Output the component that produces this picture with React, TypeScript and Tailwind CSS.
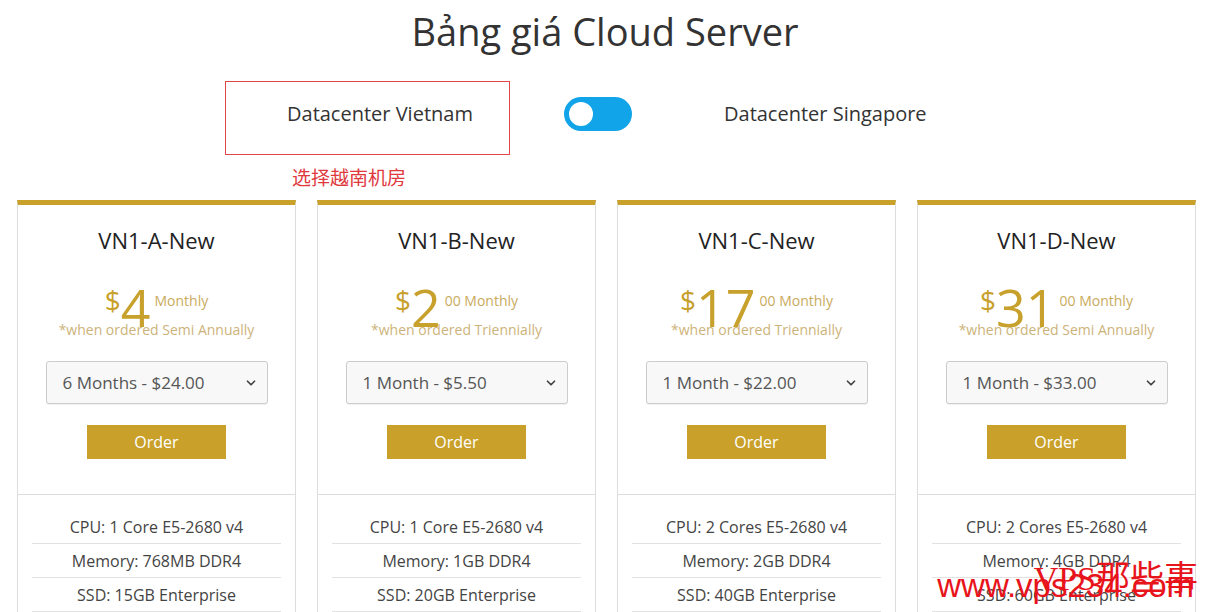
import { ChevronDown } from 'lucide-react';

interface Plan {
    name: string;
    whole: string;
    cents: string | null;
    note: string;
    option: string;
    cpu: string;
    memory: string;
    ssd: string;
}

const plans: Plan[] = [
    {
        name: 'VN1-A-New',
        whole: '4',
        cents: null,
        note: '*when ordered Semi Annually',
        option: '6 Months - $24.00',
        cpu: 'CPU: 1 Core E5-2680 v4',
        memory: 'Memory: 768MB DDR4',
        ssd: 'SSD: 15GB Enterprise',
    },
    {
        name: 'VN1-B-New',
        whole: '2',
        cents: '00',
        note: '*when ordered Triennially',
        option: '1 Month - $5.50',
        cpu: 'CPU: 1 Core E5-2680 v4',
        memory: 'Memory: 1GB DDR4',
        ssd: 'SSD: 20GB Enterprise',
    },
    {
        name: 'VN1-C-New',
        whole: '17',
        cents: '00',
        note: '*when ordered Triennially',
        option: '1 Month - $22.00',
        cpu: 'CPU: 2 Cores E5-2680 v4',
        memory: 'Memory: 2GB DDR4',
        ssd: 'SSD: 40GB Enterprise',
    },
    {
        name: 'VN1-D-New',
        whole: '31',
        cents: '00',
        note: '*when ordered Semi Annually',
        option: '1 Month - $33.00',
        cpu: 'CPU: 2 Cores E5-2680 v4',
        memory: 'Memory: 4GB DDR4',
        ssd: 'SSD: 60GB Enterprise',
    },
];

function PlanCard({ plan }: { plan: Plan }) {
    return (
        <div className="border border-[#dddddd] border-t-[5px] border-t-[#c9a02a] bg-white">
            <div className="flex flex-col items-center border-b border-[#dddddd] pt-[21px] pb-[35px]">
                <h3 className="text-[22px] leading-[28px] text-[#222]">{plan.name}</h3>

                <div className="mt-[27px] flex h-[39px] items-start justify-center text-[#c8a02c]">
                    <span className="mt-[5px] text-[28px] leading-none">$</span>
                    <span className="text-[52px] leading-none">{plan.whole}</span>
                    <span className="mt-[13px] ml-[4px] text-[14px] leading-none text-[#c9ab5c]">
                        {plan.cents ? `${plan.cents} Monthly` : 'Monthly'}
                    </span>
                </div>
                <p className="text-[14px] leading-[20px] text-[#cdb37a]">{plan.note}</p>

                <div className="mt-[21px] flex h-[43px] w-[222px] items-center justify-between rounded-[3px] border border-[#cccccc] bg-[#f8f8f8] pr-[9px] pl-[16px] text-[17px] text-[#555] shadow-[0_1px_1px_rgba(0,0,0,0.06)]">
                    <span>{plan.option}</span>
                    <ChevronDown className="h-[14px] w-[14px] text-[#444]" strokeWidth={3} />
                </div>

                <button className="mt-[21px] h-[34px] w-[139px] bg-[#c9a02a] text-[16px] text-white">Order</button>
            </div>

            <ul className="px-[14px] pt-[16px] text-center text-[16px] text-[#444]">
                <li className="h-[33px] border-b border-[#e2e2e2] leading-[33px]">{plan.cpu}</li>
                <li className="h-[34px] border-b border-[#e2e2e2] leading-[34px]">{plan.memory}</li>
                <li className="h-[34px] border-b border-[#e2e2e2] leading-[34px]">{plan.ssd}</li>
            </ul>
        </div>
    );
}

export default function App() {
    return (
        <div
            className="relative h-[612px] w-[1210px] overflow-hidden bg-white"
            style={{ fontFamily: '"Open Sans", "Noto Sans CJK SC", sans-serif' }}
        >
            <h1 className="pt-[8px] text-center text-[38px] leading-[46px] text-[#333]">Bảng giá Cloud Server</h1>

            <div className="mt-[27px] flex items-center pl-[225px]">
                <div className="flex h-[74px] w-[285px] items-center border border-[#e0474c] pb-[8px] pl-[61px] text-[20px] text-[#333]">
                    Datacenter Vietnam
                </div>
                <div className="mb-[8px] ml-[54px] flex h-[34px] w-[68px] items-center rounded-full bg-[#12a4e8] px-[2px]">
                    <div className="h-[30px] w-[30px] rounded-full border-[3px] border-[#12a4e8] bg-white" />
                </div>
                <span className="mb-[8px] ml-[92px] text-[20px] text-[#333]">Datacenter Singapore</span>
            </div>

            <p className="mt-[11px] pl-[292px] text-[19px] leading-[24px] text-[#e0393e]">选择越南机房</p>

            <div className="mt-[10px] grid grid-cols-4 gap-[21px] pr-[14px] pl-[17px]">
                {plans.map((plan) => (
                    <PlanCard key={plan.name} plan={plan} />
                ))}
            </div>

            <span
                className="pointer-events-none absolute top-[561px] right-[12px] text-[34px] leading-[36px] text-[#e8141b]"
                style={{ fontFamily: '"Liberation Serif", "Noto Sans CJK SC", serif' }}
            >
                VPS那些事
            </span>
            <span
                className="pointer-events-none absolute top-[568px] right-[16px] text-[33px] leading-[36px] text-[#e8141b]"
                style={{ fontFamily: '"Liberation Sans", sans-serif' }}
            >
                www.vps234.com
            </span>
        </div>
    );
}
